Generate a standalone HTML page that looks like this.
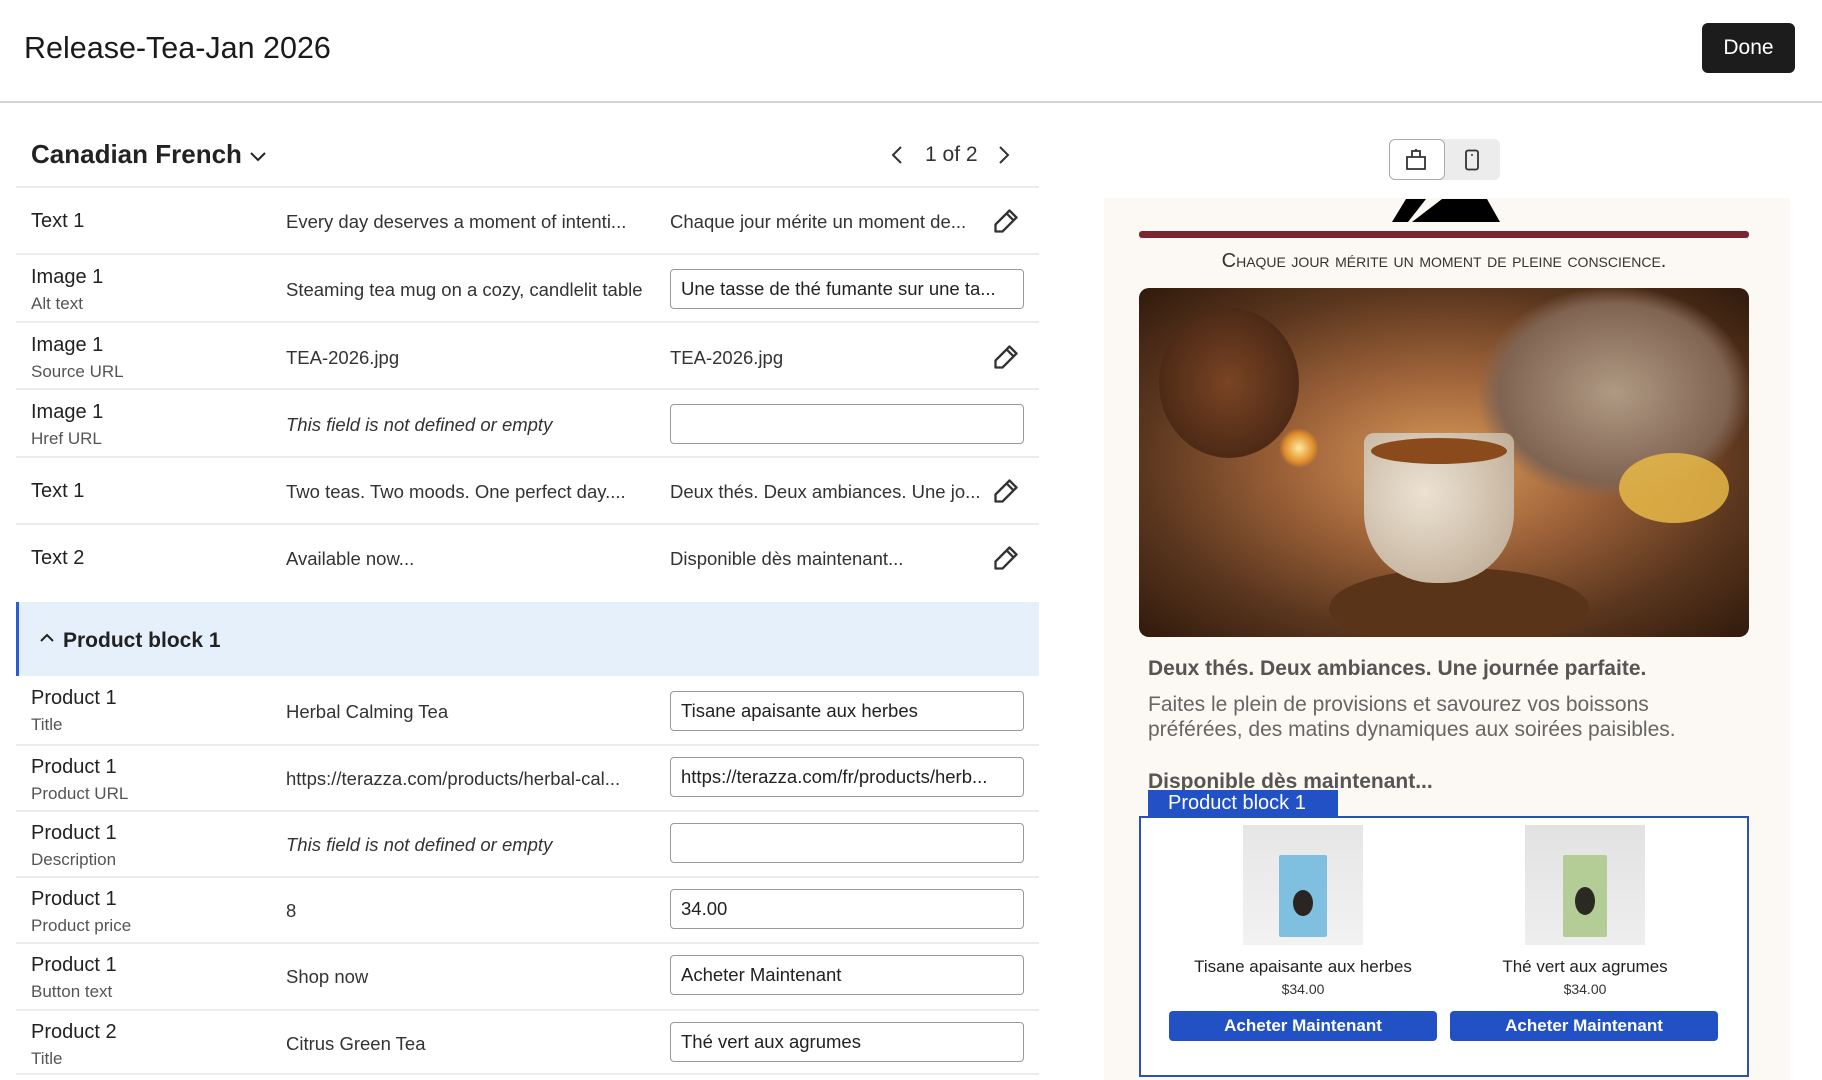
<!DOCTYPE html>
<html><head><meta charset="utf-8">
<style>
*{box-sizing:border-box;margin:0;padding:0}
body{width:1822px;height:1080px;overflow:hidden;background:#fff;font-family:"Liberation Sans",Arial,sans-serif;color:#222;position:relative}
.abs{position:absolute}
.hdr{left:0;top:0;width:1822px;height:103px;border-bottom:2px solid #d4d4d4}
.title{left:24px;top:31px;font-size:30.5px;color:#1a1a1a}
.done{left:1702px;top:23px;width:93px;height:50px;background:#1c1c1c;color:#fff;border-radius:6px;font-size:21px;display:flex;align-items:center;justify-content:center}
.lang{left:31px;top:139px;font-size:26px;font-weight:bold;color:#222}
.pg{top:143px;font-size:21px;color:#333}
.row{left:16px;width:1023px;border-top:2px solid #ececec}
.lbl{position:absolute;left:15px;font-size:20px;color:#222}
.sub{position:absolute;left:15px;font-size:17px;color:#555}
.src{position:absolute;left:270px;font-size:18.5px;color:#333;white-space:nowrap}
.tgt{position:absolute;left:654px;font-size:18.5px;color:#333;white-space:nowrap}
.inp{position:absolute;left:654px;width:354px;height:40px;border:1.5px solid #999;border-radius:4px;font-size:18.5px;color:#222;padding-left:10px;display:flex;align-items:center;white-space:nowrap;overflow:hidden}
.pen{position:absolute;left:976px}
.it{font-style:italic}
.pbh{left:16px;top:602px;width:1023px;height:74px;background:#e6f0fb;border-left:3px solid #2a5bd7}
.card{left:1104px;top:198px;width:686px;height:882px;background:#fcf8f3}
.pn{font-size:17px;color:#222;text-align:center;position:absolute;width:260px}
.pp{font-size:14px;color:#333;text-align:center;position:absolute;width:260px}
.btn{position:absolute;top:1011px;width:268px;height:30px;background:#2151c5;color:#fff;border-radius:4px;font-weight:bold;font-size:17px;display:flex;align-items:center;justify-content:center}
</style></head><body>
<div class="abs hdr"></div>
<div class="abs title">Release-Tea-Jan 2026</div>
<div class="abs done">Done</div>

<div class="abs lang">Canadian French <svg width="18" height="12" viewBox="0 0 18 12" style="vertical-align:middle"><path d="M2 3l7 7 7-7" fill="none" stroke="#222" stroke-width="2"/></svg></div>
<svg class="abs" style="left:890px;top:145px" width="14" height="20" viewBox="0 0 14 20"><path d="M11 2L3 10l8 8" fill="none" stroke="#333" stroke-width="2"/></svg>
<div class="abs pg" style="left:925px">1 of 2</div>
<svg class="abs" style="left:997px;top:145px" width="14" height="20" viewBox="0 0 14 20"><path d="M3 2l8 8-8 8" fill="none" stroke="#333" stroke-width="2"/></svg>

<div class="abs row" style="top:186px;height:67px">
 <div class="lbl" style="top:22px">Text 1</div>
 <div class="src" style="top:23px">Every day deserves a moment of intenti...</div>
 <div class="tgt" style="top:23px">Chaque jour mérite un moment de...</div>
 <svg class="pen" style="top:19px" width="28" height="28" viewBox="0 0 24 24"><path d="M15 3l6 6L9 21H3v-6z M12.5 5.5l6 6" fill="none" stroke="#333" stroke-width="2" stroke-linejoin="round"/></svg>
</div>
<div class="abs row" style="top:253px;height:68px">
 <div class="lbl" style="top:11px">Image 1</div><div class="sub" style="top:39px">Alt text</div>
 <div class="src" style="top:24px">Steaming tea mug on a cozy, candlelit table</div>
 <div class="inp" style="top:14px">Une tasse de thé fumante sur une ta...</div>
</div>
<div class="abs row" style="top:321px;height:67px">
 <div class="lbl" style="top:11px">Image 1</div><div class="sub" style="top:39px">Source URL</div>
 <div class="src" style="top:24px">TEA-2026.jpg</div>
 <div class="tgt" style="top:24px">TEA-2026.jpg</div>
 <svg class="pen" style="top:20px" width="28" height="28" viewBox="0 0 24 24"><path d="M15 3l6 6L9 21H3v-6z M12.5 5.5l6 6" fill="none" stroke="#333" stroke-width="2" stroke-linejoin="round"/></svg>
</div>
<div class="abs row" style="top:388px;height:68px">
 <div class="lbl" style="top:11px">Image 1</div><div class="sub" style="top:39px">Href URL</div>
 <div class="src it" style="top:24px">This field is not defined or empty</div>
 <div class="inp" style="top:14px"></div>
</div>
<div class="abs row" style="top:456px;height:67px">
 <div class="lbl" style="top:22px">Text 1</div>
 <div class="src" style="top:23px">Two teas. Two moods. One perfect day....</div>
 <div class="tgt" style="top:23px">Deux thés. Deux ambiances. Une jo...</div>
 <svg class="pen" style="top:19px" width="28" height="28" viewBox="0 0 24 24"><path d="M15 3l6 6L9 21H3v-6z M12.5 5.5l6 6" fill="none" stroke="#333" stroke-width="2" stroke-linejoin="round"/></svg>
</div>
<div class="abs row" style="top:523px;height:79px">
 <div class="lbl" style="top:22px">Text 2</div>
 <div class="src" style="top:23px">Available now...</div>
 <div class="tgt" style="top:23px">Disponible dès maintenant...</div>
 <svg class="pen" style="top:19px" width="28" height="28" viewBox="0 0 24 24"><path d="M15 3l6 6L9 21H3v-6z M12.5 5.5l6 6" fill="none" stroke="#333" stroke-width="2" stroke-linejoin="round"/></svg>
</div>
<div class="abs pbh">
 <svg class="abs" style="left:20px;top:30px" width="16" height="12" viewBox="0 0 16 12"><path d="M2 9l6-6 6 6" fill="none" stroke="#222" stroke-width="2"/></svg>
 <div class="abs" style="left:44px;top:27px;font-size:21px;font-weight:bold;color:#222">Product block 1</div>
</div>
<div class="abs row" style="top:676px;height:68px;border-top:none">
 <div class="lbl" style="top:11px">Product 1</div><div class="sub" style="top:39px">Title</div>
 <div class="src" style="top:25px">Herbal Calming Tea</div>
 <div class="inp" style="top:15px">Tisane apaisante aux herbes</div>
</div>
<div class="abs row" style="top:744px;height:66px">
 <div class="lbl" style="top:10px">Product 1</div><div class="sub" style="top:38px">Product URL</div>
 <div class="src" style="top:22px">https://terazza.com/products/herbal-cal...</div>
 <div class="inp" style="top:11px">https://terazza.com/fr/products/herb...</div>
</div>
<div class="abs row" style="top:810px;height:66px">
 <div class="lbl" style="top:10px">Product 1</div><div class="sub" style="top:38px">Description</div>
 <div class="src it" style="top:22px">This field is not defined or empty</div>
 <div class="inp" style="top:11px"></div>
</div>
<div class="abs row" style="top:876px;height:66px">
 <div class="lbl" style="top:10px">Product 1</div><div class="sub" style="top:38px">Product price</div>
 <div class="src" style="top:22px">8</div>
 <div class="inp" style="top:11px">34.00</div>
</div>
<div class="abs row" style="top:942px;height:67px">
 <div class="lbl" style="top:10px">Product 1</div><div class="sub" style="top:38px">Button text</div>
 <div class="src" style="top:22px">Shop now</div>
 <div class="inp" style="top:11px">Acheter Maintenant</div>
</div>
<div class="abs row" style="top:1009px;height:66px;border-bottom:2px solid #ececec">
 <div class="lbl" style="top:10px">Product 2</div><div class="sub" style="top:38px">Title</div>
 <div class="src" style="top:22px">Citrus Green Tea</div>
 <div class="inp" style="top:11px">Thé vert aux agrumes</div>
</div>

<div class="abs" style="left:1389px;top:139px;width:111px;height:41px;background:#ececec;border-radius:6px"></div>
<div class="abs" style="left:1389px;top:139px;width:56px;height:41px;background:#fff;border:1.5px solid #aaa;border-radius:6px"></div>
<svg class="abs" style="left:1404px;top:147px" width="24" height="26" viewBox="0 0 24 26"><path d="M3 10h18v12H3z M8 4h8v6H8z M12 2v2" fill="none" stroke="#333" stroke-width="1.8"/></svg>
<svg class="abs" style="left:1460px;top:148px" width="24" height="24" viewBox="0 0 24 24"><rect x="6" y="2.5" width="12" height="19" rx="2" fill="none" stroke="#333" stroke-width="1.8"/><path d="M12 6v2" stroke="#333" stroke-width="1.5"/></svg>

<div class="abs card"></div>
<svg class="abs" style="left:1390px;top:195px" width="110" height="27" viewBox="0 0 110 27"><path d="M2 27L16 4h20L18 27z M22 27L52 4h45l13 23z" fill="#000"/></svg>
<div class="abs" style="left:1139px;top:231px;width:610px;height:7px;background:#7a2530;border-radius:3px"></div>
<div class="abs" style="left:1139px;top:250px;width:610px;text-align:center;font-size:20px;color:#333;font-variant:small-caps;letter-spacing:0">Chaque jour mérite un moment de pleine conscience.</div>
<div class="abs" style="left:1139px;top:288px;width:610px;height:349px;border-radius:10px;overflow:hidden;background:radial-gradient(ellipse at 50% 50%,#d89a5a 0%,#a0643a 35%,#5a361e 70%,#301a0c 100%)">
 <div class="abs" style="left:340px;top:0px;width:270px;height:210px;background:radial-gradient(ellipse,#b09a84,#806452 60%,transparent 72%)"></div>
 <div class="abs" style="left:20px;top:20px;width:140px;height:150px;border-radius:50%;background:radial-gradient(#7a4424,#3a1f10)"></div>
 <div class="abs" style="left:140px;top:140px;width:40px;height:40px;border-radius:50%;background:radial-gradient(#ffe9a0,#e2902a 50%,transparent 70%)"></div>
 <div class="abs" style="left:190px;top:280px;width:260px;height:80px;border-radius:50%;background:#5a3418"></div>
 <div class="abs" style="left:225px;top:145px;width:150px;height:150px;border-radius:10px 10px 70px 70px;background:radial-gradient(ellipse at 40% 40%,#ece2d2,#b8a58e)"></div>
 <div class="abs" style="left:232px;top:150px;width:136px;height:26px;border-radius:50%;background:#8a4a1c"></div>
 <div class="abs" style="left:480px;top:165px;width:110px;height:70px;border-radius:50%;background:#e8b848;opacity:.85"></div>
</div>
<div class="abs" style="left:1148px;top:657px;font-size:21px;font-weight:bold;color:#555">Deux thés. Deux ambiances. Une journée parfaite.</div>
<div class="abs" style="left:1148px;top:692px;font-size:21px;color:#666;line-height:25px">Faites le plein de provisions et savourez vos boissons<br>préférées, des matins dynamiques aux soirées paisibles.</div>
<div class="abs" style="left:1148px;top:770px;font-size:21px;font-weight:bold;color:#555">Disponible dès maintenant...</div>
<div class="abs" style="left:1148px;top:790px;width:190px;height:27px;background:#2151c5;color:#fff;font-size:20px;padding-left:20px;line-height:27px">Product block 1</div>
<div class="abs" style="left:1139px;top:816px;width:610px;height:261px;background:#fff;border:2.5px solid #2a4fb8"></div>
<div class="abs" style="left:1243px;top:825px;width:120px;height:120px;background:linear-gradient(#e6e6e6,#f2f2f2)">
 <div class="abs" style="left:36px;top:30px;width:48px;height:82px;background:#7fbfdf;border-radius:2px"></div>
 <div class="abs" style="left:50px;top:65px;width:20px;height:26px;background:#2a2422;border-radius:50%"></div>
</div>
<div class="abs" style="left:1525px;top:825px;width:120px;height:120px;background:linear-gradient(#e2e2e2,#eeeeee)">
 <div class="abs" style="left:38px;top:30px;width:44px;height:82px;background:#b4cc96;border-radius:2px"></div>
 <div class="abs" style="left:50px;top:62px;width:20px;height:28px;background:#2a2a22;border-radius:50%"></div>
</div>
<div class="pn" style="left:1173px;top:957px">Tisane apaisante aux herbes</div>
<div class="pp" style="left:1173px;top:981px">$34.00</div>
<div class="pn" style="left:1455px;top:957px">Thé vert aux agrumes</div>
<div class="pp" style="left:1455px;top:981px">$34.00</div>
<div class="btn" style="left:1169px">Acheter Maintenant</div>
<div class="btn" style="left:1450px">Acheter Maintenant</div>
</body></html>
